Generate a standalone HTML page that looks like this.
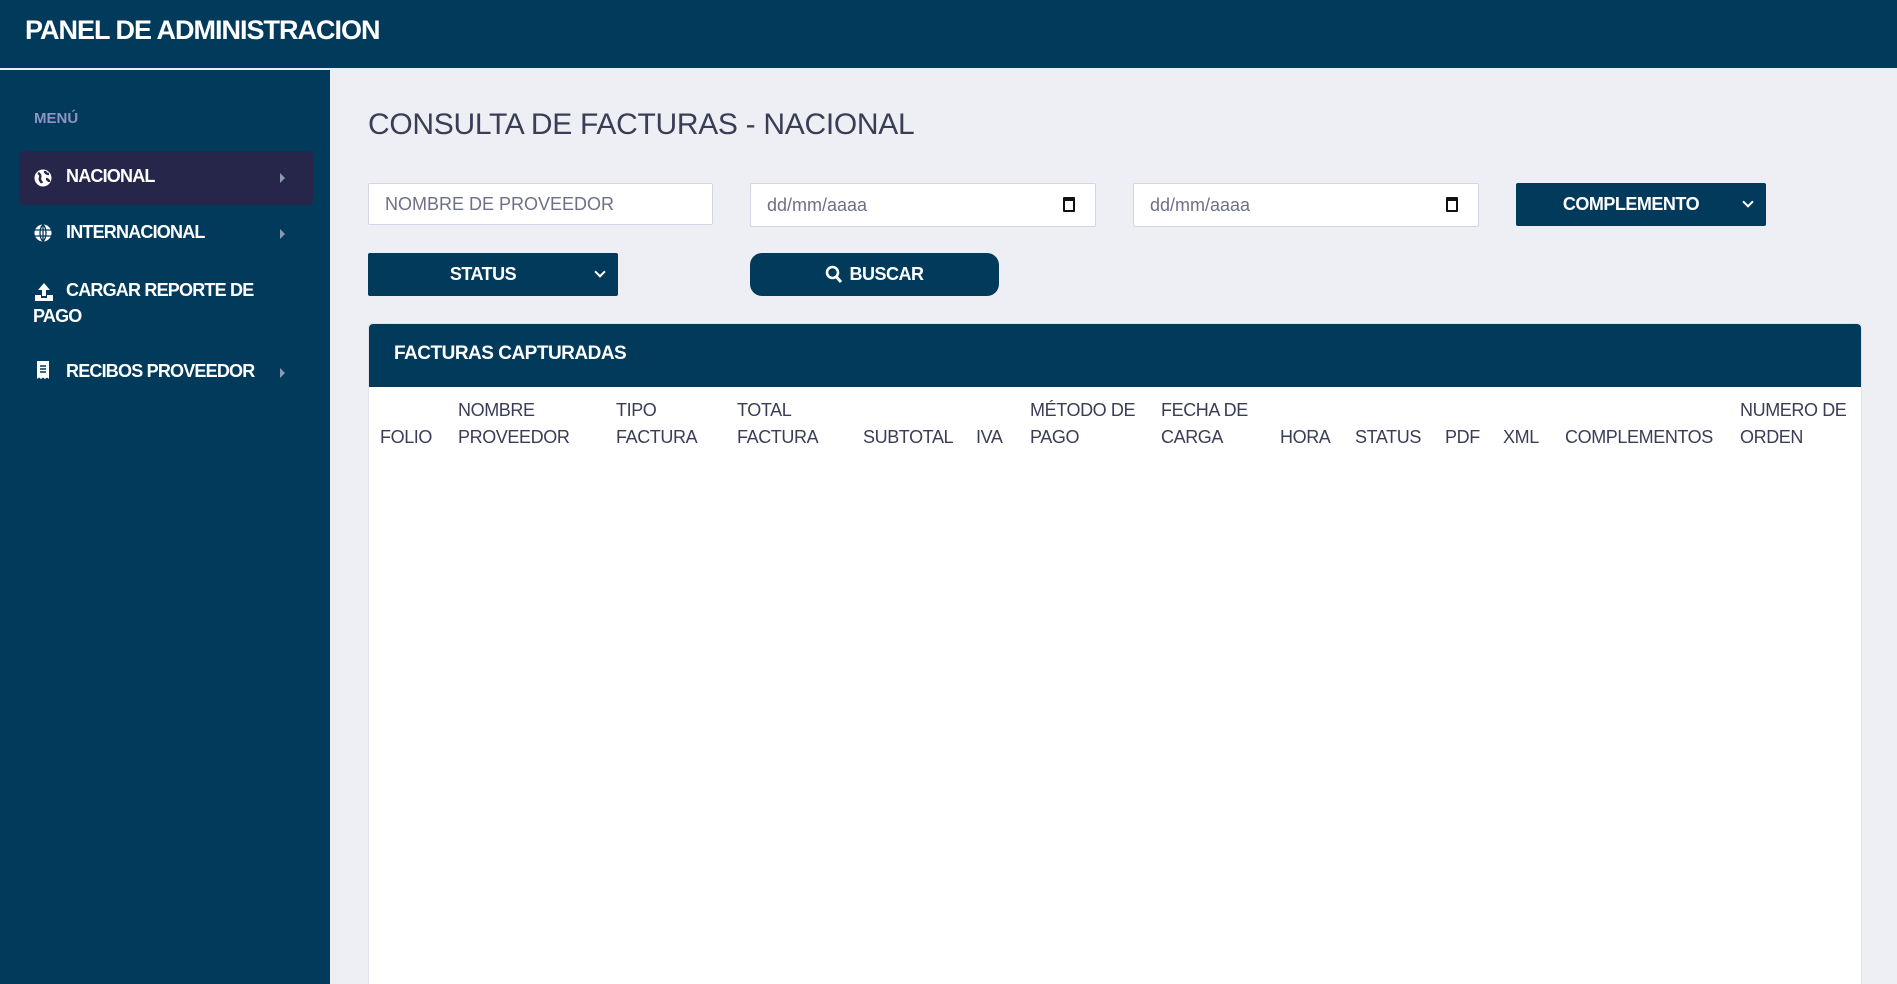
<!DOCTYPE html>
<html style="overflow:hidden;width:1897px;height:984px"><head><meta charset="utf-8"><style>
*{margin:0;padding:0;box-sizing:border-box}
body{width:1897px;height:984px;overflow:hidden;background:#eeeff5;font-family:"Liberation Sans",sans-serif;position:relative}
.hdr{position:absolute;left:0;top:0;width:1897px;height:69px;background:#023a5c;border-bottom:1px solid #e8eef5}
.hdr h1{position:absolute;left:25px;top:15px;color:#fff;font-size:27px;font-weight:bold;letter-spacing:-1px}
.side{position:absolute;left:0;top:70px;width:330px;height:914px;background:#023a5c}
.menu{position:absolute;left:34px;top:40px;color:#8f93c4;font-size:15px;font-weight:bold}
.item{position:absolute;left:19px;width:294px;color:#fff;font-size:18px;font-weight:bold;letter-spacing:-0.8px}
.item .ic{position:absolute;left:15px;width:18px;height:18px}
.item .t{position:absolute;left:47px}
.item .ar{position:absolute;left:261px;width:0;height:0;border-left:5px solid #8a9bb0;border-top:5px solid transparent;border-bottom:5px solid transparent}
.a{position:absolute;color:#3a3d56}
.inp{position:absolute;background:#fff;border:1px solid #d3d4e4;border-radius:2px;color:#6e7088;font-size:18px;padding-left:16px;display:flex;align-items:center}
.btn{position:absolute;background:#023a5c;color:#fff;font-weight:bold;font-size:18px;display:flex;align-items:center;justify-content:center;letter-spacing:-0.5px}
.cal{position:absolute;right:20px;top:13px;width:12px;height:15px;border:2px solid #111;border-top-width:4px;border-radius:1px}
.chev{position:absolute;width:8px;height:8px;border-right:2px solid #fff;border-bottom:2px solid #fff;transform:rotate(45deg)}
.card{position:absolute;left:368px;top:323px;width:1494px;height:661px;background:#fff;border:1px solid #e2e3ea;border-bottom:none;border-radius:4px 4px 0 0}
.ch{height:63px;background:#023a5c;border-radius:4px 4px 0 0;color:#fff;font-size:19px;font-weight:bold;padding:19px 0 0 25px;letter-spacing:-0.5px}
.th{position:absolute;color:#3a3d56;font-size:18px;line-height:27px;letter-spacing:-0.4px}
</style></head><body>
<div class="hdr"><h1>PANEL DE ADMINISTRACION</h1></div>
<div class="side">
<div class="menu">MENÚ</div>
<div class="item" style="top:81px;height:54px;background:#25264a;border-radius:3px">
<svg class="ic" style="top:18px" viewBox="0 0 18 18"><circle cx="9" cy="9" r="8.5" fill="#fff"/><path d="M4 4c2 1 3 3 2 5s1 3 2 5M11 2c0 2 2 3 4 3M12 10c1 0 3 1 3 3" stroke="#25264a" stroke-width="2.5" fill="none"/></svg>
<span class="t" style="top:15px">NACIONAL</span><span class="ar" style="top:22px"></span></div>
<div class="item" style="top:138px;height:50px">
<svg class="ic" style="top:16px" viewBox="0 0 18 18"><circle cx="9" cy="9" r="8.5" fill="#fff"/><path d="M0 6h18M0 12h18M9 0v18M9 .5c-4 4-4 13 0 17M9 .5c4 4 4 13 0 17" stroke="#023a5c" stroke-width="1.3" fill="none"/></svg>
<span class="t" style="top:14px">INTERNACIONAL</span><span class="ar" style="top:21px"></span></div>
<div class="item" style="top:208px;height:60px">
<svg class="ic" style="top:4px;width:20px;height:20px" viewBox="0 0 20 20"><path d="M10 1l6 7h-4v6H8V8H4z M1 13h6v3h6v-3h6v6H1z" fill="#fff"/></svg>
<span class="t" style="top:2px">CARGAR REPORTE DE</span><span style="position:absolute;left:14px;top:28px">PAGO</span></div>
<div class="item" style="top:286px;height:40px">
<svg class="ic" style="top:5px" viewBox="0 0 18 18"><path d="M3 0h12v18l-2-1.5-2 1.5-2-1.5-2 1.5-2-1.5-2 1.5z" fill="#fff"/><path d="M6 5h6M6 8h6M6 11h6" stroke="#023a5c" stroke-width="1.5"/></svg>
<span class="t" style="top:5px">RECIBOS PROVEEDOR</span><span class="ar" style="top:12px"></span></div>
</div>
<div class="a" style="left:368px;top:108px;font-size:30px;letter-spacing:-0.3px">CONSULTA DE FACTURAS - NACIONAL</div>
<div class="inp" style="left:368px;top:183px;width:345px;height:42px">NOMBRE DE PROVEEDOR</div>
<div class="inp" style="left:750px;top:183px;width:346px;height:44px">dd/mm/aaaa<span class="cal"></span></div>
<div class="inp" style="left:1133px;top:183px;width:346px;height:44px">dd/mm/aaaa<span class="cal"></span></div>
<div class="btn" style="left:1516px;top:183px;width:250px;height:43px;border-radius:2px;padding-right:20px">COMPLEMENTO<span class="chev" style="right:14px;top:15px"></span></div>
<div class="btn" style="left:368px;top:253px;width:250px;height:43px;border-radius:2px;padding-right:20px">STATUS<span class="chev" style="right:14px;top:15px"></span></div>
<div class="btn" style="left:750px;top:253px;width:249px;height:43px;border-radius:12px"><svg width="18" height="19" viewBox="0 0 18 19" style="margin-right:6px"><circle cx="7.5" cy="7.5" r="5.5" stroke="#fff" stroke-width="2.6" fill="none"/><path d="M11.5 12l4.5 5" stroke="#fff" stroke-width="3"/></svg>BUSCAR</div>
<div class="card"><div class="ch">FACTURAS CAPTURADAS</div></div>
<div class="th" style="left:380px;top:424px">FOLIO</div>
<div class="th" style="left:458px;top:397px">NOMBRE<br>PROVEEDOR</div>
<div class="th" style="left:616px;top:397px">TIPO<br>FACTURA</div>
<div class="th" style="left:737px;top:397px">TOTAL<br>FACTURA</div>
<div class="th" style="left:863px;top:424px">SUBTOTAL</div>
<div class="th" style="left:976px;top:424px">IVA</div>
<div class="th" style="left:1030px;top:397px">MÉTODO DE<br>PAGO</div>
<div class="th" style="left:1161px;top:397px">FECHA DE<br>CARGA</div>
<div class="th" style="left:1280px;top:424px">HORA</div>
<div class="th" style="left:1355px;top:424px">STATUS</div>
<div class="th" style="left:1445px;top:424px">PDF</div>
<div class="th" style="left:1503px;top:424px">XML</div>
<div class="th" style="left:1565px;top:424px">COMPLEMENTOS</div>
<div class="th" style="left:1740px;top:397px">NUMERO DE<br>ORDEN</div>
</body></html>
